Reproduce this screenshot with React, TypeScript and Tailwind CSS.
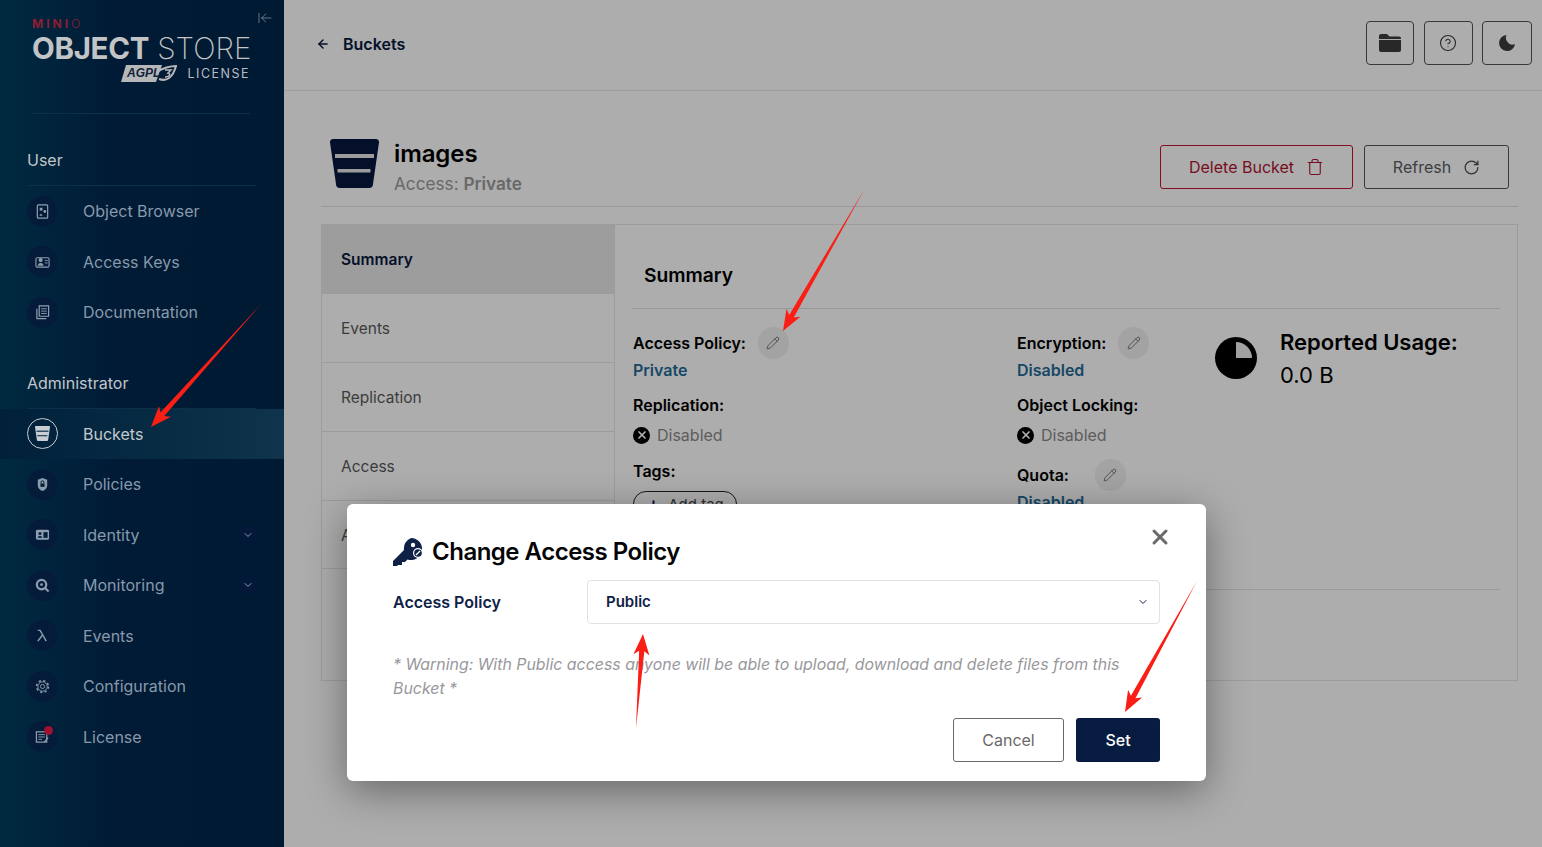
import type { ReactNode } from 'react'
import { ArrowLeft, ArrowLeftToLine, ChevronDown, CircleHelp, Pencil, Plus, RotateCw, Trash, X } from 'lucide-react'

const FONT = 'font-[Inter,"Liberation_Sans",sans-serif]'

// red annotation arrows, tail -> tip
function Arrow({ from, to }: { from: [number, number]; to: [number, number] }) {
  const dx = to[0] - from[0]
  const dy = to[1] - from[1]
  const len = Math.hypot(dx, dy)
  const ux = dx / len
  const uy = dy / len
  const nx = -uy
  const ny = ux
  const at = (back: number, side: number) =>
    `${to[0] - ux * back + nx * side},${to[1] - uy * back + ny * side}`
  const points = [
    `${from[0]},${from[1]}`,
    at(17, 2.6),
    at(21, 8),
    at(0, 0),
    at(21, -8),
    at(17, -2.6),
  ].join(' ')
  return <polygon points={points} fill="#fa1e14" />
}

function BucketGlyph({ className, bar }: { className?: string; bar: string }) {
  return (
    <svg viewBox="0 0 49 49" className={className}>
      <path d="M3 0h43a3 3 0 0 1 3 3.4L43 45a4 4 0 0 1-4 4H10a4 4 0 0 1-4-4L0 3.4A3 3 0 0 1 3 0z" fill="currentColor" />
      <rect x="5" y="15" width="39" height="4" fill={bar} />
      <rect x="7.500" y="30" width="33" height="3.500" fill={bar} />
    </svg>
  )
}

const sideIcons: Record<string, ReactNode> = {
  browser: (
    <>
      <rect x="2.500" y="1" width="11" height="14" rx="1" fill="none" stroke="currentColor" strokeWidth="1.300" />
      <rect x="5" y="4" width="3" height="3" fill="currentColor" />
      <circle cx="10.500" cy="8" r="1.500" fill="currentColor" />
      <path d="M4.500 12.500l1.800-2.500 1.800 2.500z" fill="currentColor" />
    </>
  ),
  keys: (
    <>
      <rect x="1" y="4" width="14" height="10" rx="1.500" fill="none" stroke="currentColor" strokeWidth="1.200" />
      <circle cx="6" cy="6.500" r="2.200" fill="currentColor" />
      <path d="M2.800 12.500c.4-2 1.600-2.800 3.200-2.800s2.800.8 3.200 2.800z" fill="currentColor" />
      <path d="M10.500 7h3M10.500 9.500h3" stroke="currentColor" />
    </>
  ),
  docs: (
    <>
      <path d="M4.500 1h10v11h-10z" fill="none" stroke="currentColor" strokeWidth="1.300" />
      <path d="M6.500 4h6M6.500 6.500h6M6.500 9h6" stroke="currentColor" />
      <path d="M2 4v10.500h10" fill="none" stroke="currentColor" strokeWidth="1.300" />
    </>
  ),
  policies: (
    <>
      <path d="M8 1l5 2v6c0 3-2.500 5-5 6-2.500-1-5-3-5-6V3z" fill="currentColor" />
      <rect x="5.800" y="7" width="4.400" height="3.500" fill="#01203a" />
      <path d="M6.500 7V5.500a1.500 1.500 0 0 1 3 0V7" fill="none" stroke="#01203a" />
    </>
  ),
  identity: (
    <>
      <rect x="1" y="3" width="14" height="10.500" rx="1.500" fill="currentColor" />
      <circle cx="5.300" cy="6.800" r="1.600" fill="#01203a" />
      <path d="M2.800 11.500c.3-1.500 1.200-2 2.500-2s2.200.5 2.500 2z" fill="#01203a" />
      <rect x="9" y="5.500" width="4.500" height="6" fill="#01203a" />
    </>
  ),
  monitoring: (
    <>
      <circle cx="7" cy="7" r="5" fill="none" stroke="currentColor" strokeWidth="2.400" />
      <circle cx="7" cy="7" r="1.500" fill="currentColor" />
      <path d="M10.500 10.500l4 4" stroke="currentColor" strokeWidth="2.200" />
    </>
  ),
  events: <path d="M3 2.500h2.500L12 14M8 7.500L3 14" fill="none" stroke="currentColor" strokeWidth="1.500" />,
  config: (
    <>
      <circle cx="8" cy="8" r="6.300" fill="none" stroke="currentColor" strokeWidth="1.600" strokeDasharray="2.400 2.550" />
      <circle cx="8" cy="8" r="5" fill="none" stroke="currentColor" strokeWidth="1" />
      <circle cx="8" cy="8" r="2.200" fill="none" stroke="currentColor" strokeWidth="1" />
    </>
  ),
  license: (
    <>
      <rect x="1.500" y="3" width="11" height="11" fill="none" stroke="currentColor" strokeWidth="1.300" />
      <path d="M3.500 6h7M3.500 8.500h7M3.500 11h4" stroke="currentColor" />
      <path d="M10 14l4-5" stroke="currentColor" strokeWidth="1.400" />
    </>
  ),
}

function SideRow({ icon, label, chevron, active, dot }: { icon: string; label: string; chevron?: boolean; active?: boolean; dot?: boolean }) {
  return (
    <div className={`flex h-[50.500px] items-center pl-[27px] ${active ? 'bg-linear-to-r from-[#01203a] to-[#10344c]' : ''}`}>
      <div
        className={`relative flex h-[31px] w-[31px] shrink-0 items-center justify-center rounded-full ${
          active ? 'border border-[#c6cbd0] text-[#c9ced2]' : 'bg-[#041c3a] text-[#8d9dad]'
        }`}
      >
        {active ? (
          <BucketGlyph className="h-[15px] w-[15px]" bar="#0f3249" />
        ) : (
          <svg viewBox="0 0 16 16" className="h-[15px] w-[15px]">{sideIcons[icon]}</svg>
        )}
        {dot && <span className="absolute left-[17px] top-[5px] h-[9px] w-[9px] rounded-full bg-[#9c1230]" />}
      </div>
      <span className={`ml-[25px] text-base ${active ? 'text-[#c4c9ce]' : 'text-[#8799ab]'}`}>{label}</span>
      {chevron && (
        <span className="ml-auto mr-[28px] flex h-[17px] w-[17px] items-center justify-center rounded-[2px] bg-[#04193a] text-[#8799ab]">
          <ChevronDown size={12} />
        </span>
      )}
    </div>
  )
}

function Sidebar() {
  return (
    <aside className="relative z-10 flex h-full w-[284px] shrink-0 flex-col bg-linear-to-r from-[#002a3f] via-[#011b36] via-40% to-[#011a33]">
      <ArrowLeftToLine size={16} strokeWidth={1} className="absolute left-[257px] top-[10px] text-[#9aa5b1]" />
      <div className="mx-[32px] h-[114px] w-[218px] border-b border-[#0d3049]">
        <div className="pt-[17px] text-[12px] font-bold leading-[13px] tracking-[3px] text-[#8f1c34]">
          MINI<span className="font-light">O</span>
        </div>
        <div className="whitespace-nowrap text-[29.500px] leading-[36px] tracking-[-0.3px] text-[#c2c4c6]">
          <span className="font-bold">OBJECT</span> <span className="font-extralight tracking-[0.1px]">STORE</span>
        </div>
        <div className="-mt-[2px] flex items-center justify-end">
          <svg viewBox="0 0 56 19" className="mr-[10px] h-[19px] w-[56px]">
            <path d="M5 1h36l-6 17H0z" fill="#b5b7b9" />
            <text x="6" y="13" fontSize="12" fontWeight="700" fontStyle="italic" fill="#14233a" fontFamily="Liberation Sans">AGPL</text>
            <path d="M38 15c8 3 14-2 17-13-5 0-14 2-19 6" fill="none" stroke="#b5b7b9" strokeWidth="2" />
            <path d="M44 6h6l-3 3c3 0 2 4-3 4" fill="none" stroke="#b5b7b9" strokeWidth="1.500" />
          </svg>
          <span className="text-[12.500px] font-normal leading-4 tracking-[1.500px] text-[#b9bcbf]">LICENSE</span>
        </div>
      </div>

      <div className="mx-[27px] mt-[24px] h-[48px] w-[229px] border-b border-[#0d3049] text-base leading-[44px] text-[#c2c6ca]">User</div>
      <SideRow icon="browser" label="Object Browser" />
      <SideRow icon="keys" label="Access Keys" />
      <SideRow icon="docs" label="Documentation" />

      <div className="mx-[27px] mt-[20px] h-[51px] w-[229px] border-b border-[#0d3049] text-base leading-[51px] text-[#c2c6ca]">Administrator</div>
      <SideRow icon="buckets" label="Buckets" active />
      <SideRow icon="policies" label="Policies" />
      <SideRow icon="identity" label="Identity" chevron />
      <SideRow icon="monitoring" label="Monitoring" chevron />
      <SideRow icon="events" label="Events" />
      <SideRow icon="config" label="Configuration" />
      <SideRow icon="license" label="License" dot />
    </aside>
  )
}

function IconButton({ width, children }: { width: string; children: ReactNode }) {
  return (
    <div className={`flex h-[44px] items-center justify-center rounded-[4px] border border-[#555] text-[#3c3c3c] ${width}`}>
      {children}
    </div>
  )
}

function EditBubble() {
  return (
    <span className="flex h-[32px] w-[31px] items-center justify-center rounded-full bg-[#f0f0f0] text-[#696969]">
      <Pencil size={14} strokeWidth={1.500} />
    </span>
  )
}

function DisabledFlag() {
  return (
    <div className="mt-[6px] flex items-center gap-[7px] text-base leading-[24px] text-[#8a8a8a]">
      <span className="flex h-[17px] w-[17px] items-center justify-center rounded-full bg-black text-white">
        <X size={12} strokeWidth={3.500} />
      </span>
      Disabled
    </div>
  )
}

function Label({ children }: { children: ReactNode }) {
  return <span className="text-base font-semibold leading-[24px] text-black">{children}</span>
}

function TabRow({ label, active }: { label: string; active?: boolean }) {
  return (
    <div
      className={`flex h-[68.900px] items-center border-b border-[#e6e6e6] pl-[19px] pt-[2px] text-[15.500px] ${
        active ? 'bg-[#e8e8e8] font-semibold text-[#07193e]' : 'text-[#595959]'
      }`}
    >
      {label}
    </div>
  )
}

function BucketPage() {
  return (
    <main className="min-w-0 flex-1 bg-white">
      <header className="flex h-[91px] items-center justify-between border-b border-[#e6e6e6] pl-[32px] pr-[10px]">
        <div className="-mt-[2px] flex items-center gap-[13px] text-base font-semibold text-[#07193e]">
          <ArrowLeft size={14} strokeWidth={2.500} />
          Buckets
        </div>
        <div className="-mt-[4px] flex gap-[9.500px]">
          <IconButton width="w-[48px]">
            <svg viewBox="0 0 22 18" className="h-[18px] w-[22px]">
              <path d="M2 0h6l2.500 2.500H20a2 2 0 0 1 2 2V5H0V2a2 2 0 0 1 2-2z" fill="currentColor" />
              <path d="M0 6h22v10a2 2 0 0 1-2 2H2a2 2 0 0 1-2-2z" fill="currentColor" />
            </svg>
          </IconButton>
          <IconButton width="w-[49px]">
            <CircleHelp size={18} strokeWidth={1.500} />
          </IconButton>
          <IconButton width="w-[50px]">
            <svg viewBox="0 0 16 16" className="h-[16px] w-[16px]">
              <path d="M7.500 0A8 8 0 1 0 16 9 6 6 0 0 1 8.500 7 6.500 6.500 0 0 1 7.500 0z" fill="currentColor" />
            </svg>
          </IconButton>
        </div>
      </header>

      <div className="ml-[37px] mr-[24px]">
        <div className="flex h-[116px] items-end border-b border-[#e2e2e2] pb-[17px] pl-[9px] pr-[9px]">
          <BucketGlyph className="mb-[1px] h-[49px] w-[49px] text-[#07193e]" bar="#e6e6e6" />
          <div className="-mb-[7px] ml-[15px]">
            <div className="text-2xl font-semibold leading-[30px] tracking-[-0.1px] text-black">images</div>
            <div className="mt-[3px] text-[17.200px] leading-[24px] text-[#9a9a9a]">
              Access: <span className="font-semibold">Private</span>
            </div>
          </div>
          <div className="ml-auto flex gap-[11px]">
            <div className="flex h-[44px] w-[193px] items-center justify-center gap-[12px] rounded-[3px] border border-[#c1122f] text-base text-[#b01432]">
              Delete Bucket
              <Trash size={18} strokeWidth={1.500} />
            </div>
            <div className="flex h-[44px] w-[145px] items-center justify-center gap-[12px] rounded-[3px] border border-[#555] text-base text-[#585d62]">
              Refresh
              <RotateCw size={17} strokeWidth={1.750} className="text-[#4a4a4a]" />
            </div>
          </div>
        </div>

        <div className="mt-[17px] flex h-[457px] border border-[#e6e6e6]">
          <div className="w-[293px] shrink-0 border-r border-[#e6e6e6]">
            <TabRow label="Summary" active />
            <TabRow label="Events" />
            <TabRow label="Replication" />
            <TabRow label="Access" />
            <TabRow label="Anonymous" />
          </div>
          <div className="min-w-0 flex-1 px-[17px]">
            <div className="h-[84px] border-b border-[#e2e2e2] pl-[12px] pt-[37px] text-[19.200px] font-semibold leading-[26px] text-black">Summary</div>
            <div className="grid grid-cols-[384px_198px_1fr] pl-[1px] pt-[18px]">
              <div>
                <div className="flex h-[32px] items-center gap-[12px]">
                  <Label>Access Policy:</Label>
                  <EditBubble />
                </div>
                <div className="-mt-[1px] text-base font-semibold leading-[24px] text-[#236a96]">Private</div>
                <div className="mt-[11px]"><Label>Replication:</Label></div>
                <DisabledFlag />
                <div className="mt-[12px]"><Label>Tags:</Label></div>
                <div className="mt-[8px] flex h-[26px] w-[104px] items-center justify-center gap-[7px] rounded-full border border-[#222] pt-[2px] text-[15px] text-[#444]">
                  <Plus size={15} strokeWidth={3} className="text-[#07193e]" />
                  Add tag
                </div>
              </div>
              <div>
                <div className="flex h-[32px] items-center gap-[12px]">
                  <Label>Encryption:</Label>
                  <EditBubble />
                </div>
                <div className="-mt-[1px] text-base font-semibold leading-[24px] text-[#236a96]">Disabled</div>
                <div className="mt-[11px]"><Label>Object Locking:</Label></div>
                <DisabledFlag />
                <div className="mt-[12px] flex h-[32px] items-center gap-[26px]">
                  <Label>Quota:</Label>
                  <EditBubble />
                </div>
                <div className="-mt-[1px] text-base font-semibold leading-[24px] text-[#236a96]">Disabled</div>
              </div>
              <div className="flex items-start">
                <svg viewBox="0 0 42 42" className="mt-[10px] h-[42px] w-[42px]">
                  <circle cx="21" cy="21" r="21" fill="#000" />
                  <path d="M21 5a16 16 0 0 1 16 16H21z" fill="#ededed" />
                </svg>
                <div className="ml-[23px]">
                  <div className="text-[22px] font-semibold leading-[30px] text-black">Reported Usage:</div>
                  <div className="mt-[3px] text-[22px] leading-[30px] text-black">0.0 B</div>
                </div>
              </div>
            </div>
            <div className="mt-[72px] border-b border-[#e2e2e2]" />
          </div>
        </div>
      </div>
    </main>
  )
}

function AccessPolicyModal() {
  return (
    <div className="absolute left-[347px] top-[504px] z-20 h-[277px] w-[859px] rounded-[6px] bg-white px-[46px] pt-[32px] shadow-[0_10px_40px_rgba(0,0,0,0.4)]">
      <X size={24} strokeWidth={3} className="absolute right-[34px] top-[21px] text-[#6a6a6a]" />
      <div className="flex h-[31px] items-center gap-[9px]">
        <svg viewBox="0 0 30 28" className="h-[28px] w-[30px]">
          <path d="M18 0a11 11 0 1 1-3.500 21.400L12 24H9v3H5l-1 1H0v-5l11-11A11 11 0 0 1 18 0z" fill="#0f2147" />
          <circle cx="20" cy="7" r="2.200" fill="#fff" />
          <circle cx="25" cy="15" r="5" fill="#fff" />
          <circle cx="25" cy="15" r="3.800" fill="#0f2147" />
          <path d="M23 17l4-4" stroke="#fff" strokeWidth="1.200" />
        </svg>
        <span className="text-2xl font-semibold leading-[31px] tracking-[-0.5px] text-[#050505]">Change Access Policy</span>
      </div>
      <div className="mt-[13px] flex items-center">
        <span className="w-[194px] text-base font-semibold text-[#0f2147]">Access Policy</span>
        <div className="flex h-[44px] w-[573px] items-center justify-between rounded-[4px] border border-[#e2e2e2] pl-[18px] pr-[10px] text-[15px] font-semibold text-[#0f2147]">
          Public
          <ChevronDown size={12} strokeWidth={2} />
        </div>
      </div>
      <p className="mt-[29px] w-[767px] text-[15.900px] italic leading-[24px] text-[#98989c]">
        * Warning: With Public access anyone will be able to upload, download and delete files from this Bucket *
      </p>
      <div className="absolute bottom-[19px] right-[46px] flex gap-[12px]">
        <div className="flex h-[44px] w-[111px] items-center justify-center rounded-[3px] border border-[#696969] text-base text-[#696969]">Cancel</div>
        <div className="flex h-[44px] w-[84px] items-center justify-center rounded-[3px] bg-[#081c42] text-base font-medium text-white">Set</div>
      </div>
    </div>
  )
}

export default function App() {
  return (
    <div className={`relative flex h-[847px] w-full overflow-hidden ${FONT}`}>
      <Sidebar />
      <BucketPage />
      <div className="absolute inset-0 bg-black/32" />
      <AccessPolicyModal />
      <svg className="pointer-events-none absolute inset-0 z-30 h-full w-full">
        <Arrow from={[864, 190]} to={[783, 331]} />
        <Arrow from={[262, 303]} to={[151, 427]} />
        <Arrow from={[636, 728]} to={[643, 634]} />
        <Arrow from={[1197, 581]} to={[1125, 712]} />
      </svg>
    </div>
  )
}
